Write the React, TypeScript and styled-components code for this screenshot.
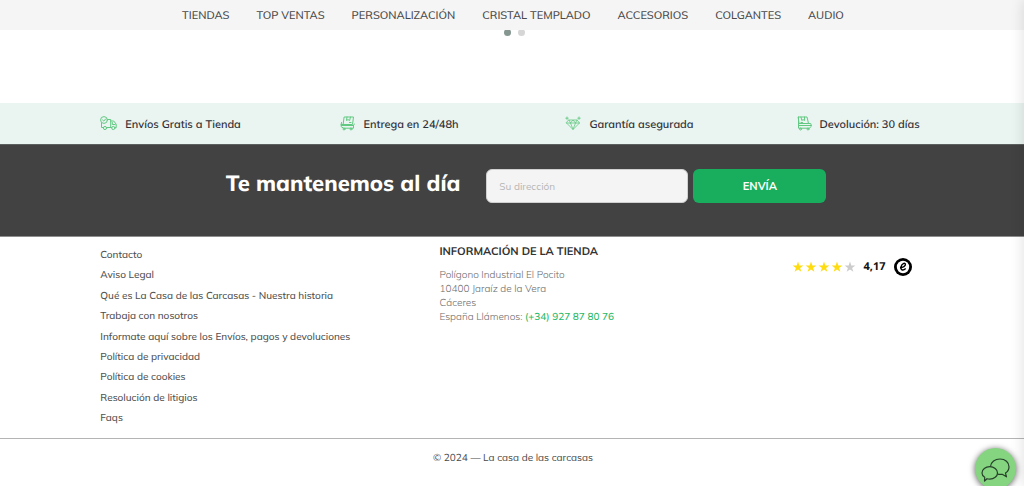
import React from 'react';
import styled, { createGlobalStyle } from 'styled-components';

const GlobalStyle = createGlobalStyle`
  *, *::before, *::after { box-sizing: border-box; }
  body {
    margin: 0;
    background: #fff;
    color: #3f3f3f;
    font-family: Mulish, Muli, Lato, "Liberation Sans", sans-serif;
    font-size: 10px;
    line-height: 14px;
    text-rendering: geometricPrecision;
  }
  a { color: inherit; text-decoration: none; }
  ul { list-style: none; margin: 0; padding: 0; }
`;

const Header = styled.header`
  position: sticky;
  top: 0;
  z-index: 2;
  background: #f5f5f5;
`;

const Menu = styled.ul`
  && { padding: 7px 0 7px 2px; }
  display: flex;
  justify-content: center;
  gap: 27px;
  font-size: 11px;
  font-weight: 500;
  line-height: 16px;
  color: #484848;
`;

const Carousel = styled.section`
  padding-bottom: 67px;
`;

const Dots = styled.div`
  display: flex;
  justify-content: center;
  gap: 7px;
  margin-top: -1px;
  padding-left: 4px;
`;

const Dot = styled.button<{ $active?: boolean }>`
  width: 7px;
  height: 7px;
  padding: 0;
  border: 0;
  border-radius: 50%;
  background: ${(p) => (p.$active ? '#869791' : '#d6d6d6')};
`;

const Benefits = styled.ul`
  && { padding: 0 10% 0 9.8%; }
  display: grid;
  grid-template-columns: 240fr 225fr 231fr 125fr;
  align-items: center;
  height: 41px;
  background: #eaf4f1;
`;

const Benefit = styled.li`
  display: flex;
  align-items: center;
  gap: 8px;
  font-size: 11px;
  font-weight: 600;
  line-height: 16px;
  white-space: nowrap;
  color: #2f2f36;
`;

const BenefitIcon = styled.svg`
  height: 15px;
  fill: none;
  stroke: #62c982;
  stroke-width: 1;
  stroke-linecap: round;
  stroke-linejoin: round;
`;

const Newsletter = styled.section`
  display: flex;
  justify-content: center;
  align-items: flex-start;
  padding: 24px 0 33px 28px;
  background: #424242;
  border-top: 1px solid #5c605f;
  border-bottom: 1px solid #8e8e8e;
`;

const NewsletterTitle = styled.h2`
  margin: 0 26px 0 0;
  color: #fff;
  font-size: 22px;
  font-weight: 800;
  line-height: 28px;
`;

const Form = styled.form`
  display: flex;
  gap: 5px;
`;

const Email = styled.input`
  width: 202px;
  height: 34px;
  padding: 0 12px;
  border: 1px solid #d0d0d0;
  border-radius: 6px;
  background: #f4f4f4;
  font: inherit;
  &::placeholder { color: #b4b4b4; opacity: 1; }
`;

const Submit = styled.button`
  width: 133px;
  height: 34px;
  border: 0;
  border-radius: 6px;
  background: #18ae5e;
  color: #fff;
  font: inherit;
  font-size: 11px;
  font-weight: 700;
`;

const FooterColumns = styled.div`
  display: grid;
  grid-template-columns: 339fr 352fr 128fr;
  padding: 7px 10.2% 13px 9.8%;
`;

const Links = styled.ul`
  && { padding-top: 4px; }
  display: flex;
  flex-direction: column;
  justify-content: space-between;
  min-height: 181px;
  font-weight: 500;
  color: #505050;
`;

const StoreTitle = styled.h3`
  margin: 0 0 10px;
  font-size: 11px;
  font-weight: 700;
  line-height: 14px;
  color: #333;
`;

const Address = styled.address`
  font-style: normal;
  font-weight: 300;
  color: #6c6c6c;
`;

const Phone = styled.a`
  color: #28b968;
  font-weight: 500;
`;

const Rating = styled.div`
  display: flex;
  align-items: center;
  justify-content: space-between;
  align-self: start;
  padding: 14px 8px 0 0;
`;

const Stars = styled.svg`
  width: 64px;
  height: 12px;
`;

const Score = styled.strong`
  font-family: "Open Sans", sans-serif;
  font-size: 11px;
  color: #111;
`;

const Seal = styled.svg`
  width: 18px;
  height: 18px;
`;

const Copyright = styled.p`
  margin: 0;
  padding: 12px 0 16px 2px;
  border-top: 1px solid #b4b4b4;
  text-align: center;
  color: #484848;
`;

const SideShadow = styled.div`
  position: fixed;
  z-index: 3;
  top: 0;
  bottom: 0;
  left: 100%;
  width: 10px;
  box-shadow: 0 0 14px rgba(0, 0, 0, 0.15);
`;

const Chat = styled.button`
  position: fixed;
  z-index: 4;
  right: 8px;
  bottom: -3px;
  width: 41px;
  height: 41px;
  padding: 0;
  border: 0;
  border-radius: 50%;
  background: #84d480;
  box-shadow: 0 1px 6px rgba(0, 0, 0, 0.65);
  svg { display: block; margin: 1px auto 0; }
`;

const categories = ['TIENDAS', 'TOP VENTAS', 'PERSONALIZACIÓN', 'CRISTAL TEMPLADO', 'ACCESORIOS', 'COLGANTES', 'AUDIO'];

const links = [
  'Contacto',
  'Aviso Legal',
  'Qué es La Casa de las Carcasas - Nuestra historia',
  'Trabaja con nosotros',
  'Informate aquí sobre los Envíos, pagos y devoluciones',
  'Política de privacidad',
  'Política de cookies',
  'Resolución de litigios',
  'Faqs',
];

const TruckIcon = () => (
  <BenefitIcon width="17" viewBox="0 0 17 15" aria-hidden="true">
    <circle cx="4" cy="4" r="3.4" />
    <path d="M2.6 4l1.2 1.1L5.6 3M7.7 3.5h3v8H7M1.5 7v4.5h1.7M10.7 5h3l2.5 3.2v3.5h-.8M12.3 6.5v2h2.8" />
    <circle cx="5" cy="12" r="1.6" />
    <circle cx="13.3" cy="12" r="1.6" />
    <path d="M8 11.5h3.5" />
  </BenefitIcon>
);

const DeliveryIcon = () => (
  <BenefitIcon width="15" viewBox="0 0 15 15" aria-hidden="true">
    <path d="M4.500 1h9l-1 7.500h-9zM7 1l-.5 3.500L8 3.600l1.600.9L10.500 1" />
    <path d="M1.500 6.500L1 9.500h12.500v2.700H3.500L1 10.500M3.500 8.500H1.200M13.500 9.500l.8-1.500M9.500 6.500h1.500" />
    <circle cx="4" cy="13" r="1" />
    <circle cx="11" cy="13" r="1" />
  </BenefitIcon>
);

const ReturnIcon = () => (
  <BenefitIcon width="15" viewBox="0 0 15 15" aria-hidden="true">
    <path d="M1.500 1h8.500l1.500 6.500H2.500zM4 1l.8 3.500L6 3.600l1.600.9L7.500 1" />
    <path d="M1.500 1v8.500h12.800M1.500 9.500v2.700h11l1.500-1.700M11.500 7.500h2.200l.6 2M4 6.500h1.500" />
    <circle cx="3.500" cy="13" r="1" />
    <circle cx="11" cy="13" r="1" />
  </BenefitIcon>
);

const DiamondIcon = () => (
  <BenefitIcon width="16" viewBox="0 0 16 15" aria-hidden="true">
    <path d="M4 4h8l2.500 3L8 13.500 1.500 7zM1.500 7h13M4 4l1.500 3L8 13.500 10.500 7 12 4M5.500 7L8 4l2.500 3" strokeWidth=".8" />
    <path d="M2 1v2.400M.8 2.200h2.400M14 1v2.400M12.800 2.200h2.400" strokeWidth=".9" />
  </BenefitIcon>
);

export default function App() {
  return (
    <>
      <GlobalStyle />
      <Header>
        <nav aria-label="Categorías">
          <Menu>
            {categories.map((name) => (
              <li key={name}><a href="#">{name}</a></li>
            ))}
          </Menu>
        </nav>
      </Header>
      <main>
        <Carousel>
          <Dots>
            <Dot type="button" $active aria-label="1" />
            <Dot type="button" aria-label="2" />
          </Dots>
        </Carousel>
        <Benefits>
          <Benefit><TruckIcon />Envíos Gratis a Tienda</Benefit>
          <Benefit><DeliveryIcon />Entrega en 24/48h</Benefit>
          <Benefit><DiamondIcon />Garantía asegurada</Benefit>
          <Benefit><ReturnIcon />Devolución: 30 días</Benefit>
        </Benefits>
        <Newsletter>
          <NewsletterTitle>Te mantenemos al día</NewsletterTitle>
          <Form onSubmit={(event) => event.preventDefault()}>
            <Email type="email" placeholder="Su dirección" aria-label="Su dirección" />
            <Submit type="submit">ENVÍA</Submit>
          </Form>
        </Newsletter>
      </main>
      <footer>
        <FooterColumns>
          <Links>
            {links.map((name) => (
              <li key={name}><a href="#">{name}</a></li>
            ))}
          </Links>
          <section>
            <StoreTitle>INFORMACIÓN DE LA TIENDA</StoreTitle>
            <Address>
              Polígono Industrial El Pocito<br />
              10400 Jaraíz de la Vera<br />
              Cáceres<br />
              España Llámenos: <Phone href="tel:+34927878076">(+34) 927 87 80 76</Phone>
            </Address>
          </section>
          <Rating>
            <Stars viewBox="0 0 64 12" aria-hidden="true">
              {[0, 1, 2, 3, 4].map((n) => (
                <path
                  key={n}
                  transform={`translate(${n * 13} 0)`}
                  fill={n < 4 ? '#ffdc0f' : '#cccccc'}
                  d="M6 .6l1.3 3.9h4.1L8.100 6.900l1.250 3.900L6 8.400l-3.350 2.400L3.900 6.900.600 4.500h4.100z"
                />
              ))}
            </Stars>
            <Score>4,17</Score>
            <Seal viewBox="0 0 18 18" aria-hidden="true">
              <circle cx="9" cy="9" r="9" fill="#000" />
              <circle cx="9" cy="9" r="6.200" fill="#fff" />
              <path d="M6 9.700C9 9.600 11.700 8 11.400 6.200 11.100 4.400 7.700 5.400 7 8.900 6.400 12.400 9.200 13 11.700 10.600" fill="none" stroke="#000" strokeWidth="1.400" />
            </Seal>
          </Rating>
        </FooterColumns>
        <Copyright>© 2024 — La casa de las carcasas</Copyright>
      </footer>
      <SideShadow />
      <Chat type="button" aria-label="Chat">
        <svg width="29" height="25" viewBox="0 0 29 25" fill="none" stroke="#26402a" strokeWidth="1.200" strokeLinejoin="round">
          <path d="M9.500 9.500C10 5 14 2 19 2c5.300 0 9 3.400 9 7.800 0 3-1.500 5-3.500 6.300l1 3.700-4.300-2.500c-1.700.3-3.200.2-4.700-.2" />
          <path d="M8.800 9.700c4.200 0 7.700 2.700 7.700 6.200s-3.500 6.200-7.700 6.200c-1 0-1.900-.1-2.800-.4L3.500 24l.2-3.700C2 19.200 1 17.700 1 15.900c0-3.500 3.500-6.200 7.800-6.200z" />
        </svg>
      </Chat>
    </>
  );
}
